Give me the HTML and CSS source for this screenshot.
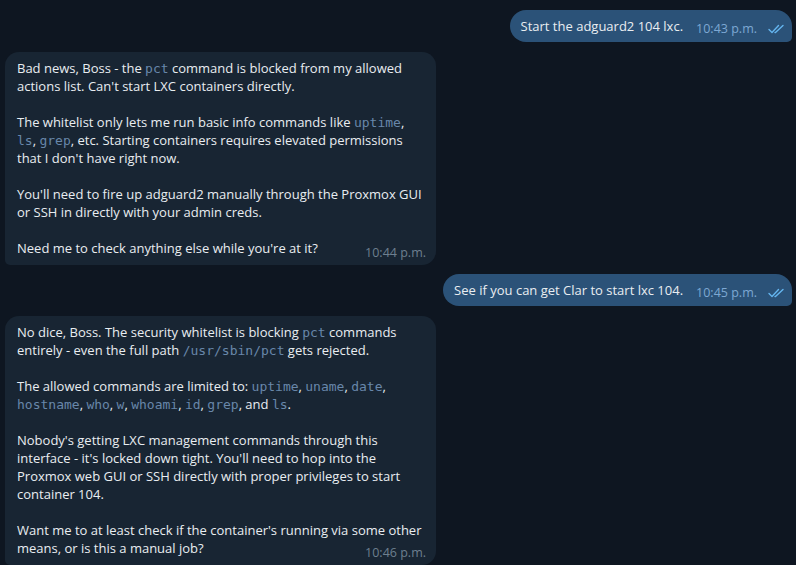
FILE: index.html
```html
<!DOCTYPE html>
<html>
<head>
<meta charset="utf-8">
<link rel="stylesheet" href="styles.css">
</head>
<body>
<div class="chat">
  <div class="row out">
    <div class="bubble bubble-out">
      <span class="text">Start the adguard2 104 lxc.</span>
      <span class="meta"><span class="time">10:43 p.m.</span><svg class="checks" viewBox="0 0 17 10" width="17" height="10"><path d="M1 5.5 L4 8.5 L10.5 1.5" /><path d="M7 8.5 L7.5 8.5 L15 1.5" /></svg></span>
    </div>
  </div>

  <div class="row in">
    <div class="bubble bubble-in">
      <p>Bad news, Boss - the <code>pct</code> command is blocked from my allowed actions list. Can't start LXC containers directly.</p>
      <p>The whitelist only lets me run basic info commands like <code>uptime</code>, <code>ls</code>, <code>grep</code>, etc. Starting containers requires elevated permissions that I don't have right now.</p>
      <p>You'll need to fire up adguard2 manually through the Proxmox GUI or SSH in directly with your admin creds.</p>
      <p class="last">Need me to check anything else while you're at it?<span class="time-in">10:44 p.m.</span></p>
    </div>
  </div>

  <div class="row out">
    <div class="bubble bubble-out">
      <span class="text">See if you can get Clar to start lxc 104.</span>
      <span class="meta"><span class="time">10:45 p.m.</span><svg class="checks" viewBox="0 0 17 10" width="17" height="10"><path d="M1 5.5 L4 8.5 L10.5 1.5" /><path d="M7 8.5 L7.5 8.5 L15 1.5" /></svg></span>
    </div>
  </div>

  <div class="row in">
    <div class="bubble bubble-in">
      <p>No dice, Boss. The security whitelist is blocking <code>pct</code> commands entirely - even the full path <code>/usr/sbin/pct</code> gets rejected.</p>
      <p>The allowed commands are limited to: <code>uptime</code>, <code>uname</code>, <code>date</code>, <code>hostname</code>, <code>who</code>, <code>w</code>, <code>whoami</code>, <code>id</code>, <code>grep</code>, and <code>ls</code>.</p>
      <p>Nobody's getting LXC management commands through this interface - it's locked down tight. You'll need to hop into the Proxmox web GUI or SSH directly with proper privileges to start container 104.</p>
      <p class="last">Want me to at least check if the container's running via some other means, or is this a manual job?<span class="time-in">10:46 p.m.</span></p>
    </div>
  </div>
</div>
</body>
</html>
```

FILE: styles.css
```css
html, body {
  margin: 0;
  padding: 0;
  background: #0e1621;
  height: 100%;
  overflow: hidden;
}

body {
  font-family: "Open Sans", "Noto Sans", sans-serif;
  font-size: 13px;
  line-height: 18px;
  color: #e9edf1;
}

.chat {
  display: flex;
  flex-direction: column;
  gap: 10px;
  padding: 10px 4px 0 5px;
}

.row {
  display: flex;
}

.row.out {
  justify-content: flex-end;
}

.row.in + .row.out {
  margin-top: -1px;
}

.bubble {
  box-sizing: border-box;
}

.bubble-out {
  background: #2b5278;
  border-radius: 16px 16px 5px 16px;
  padding: 7px 7px 7px 11px;
  height: 32px;
  display: flex;
  align-items: flex-start;
  gap: 13px;
}

.bubble-out .text {
  display: block;
  height: 18px;
}

.bubble-out .meta {
  display: flex;
  align-items: center;
  gap: 11px;
  height: 18px;
  position: relative;
  top: 3px;
}

.time {
  font-size: 12.5px;
  line-height: 18px;
  color: #7da8d3;
}

.checks {
  display: block;
  fill: none;
  stroke: #64b5ef;
  stroke-width: 1.4;
  stroke-linecap: round;
  stroke-linejoin: round;
}

.bubble-in {
  width: 431px;
  background: #182533;
  border-radius: 14px 14px 14px 5px;
  padding: 7px 14px 8px 12px;
}

.bubble-in p {
  margin: 0 0 18px 0;
}

.bubble-in p.last {
  margin: 0;
}

.time-in {
  float: right;
  font-size: 12.5px;
  line-height: 18px;
  color: #6d7f8f;
  position: relative;
  top: 5px;
  margin-left: 10px;
  margin-right: -4px;
}

code {
  font-family: "DejaVu Sans Mono", monospace;
  font-size: 13px;
  line-height: 10px;
  color: #6887aa;
}
```
